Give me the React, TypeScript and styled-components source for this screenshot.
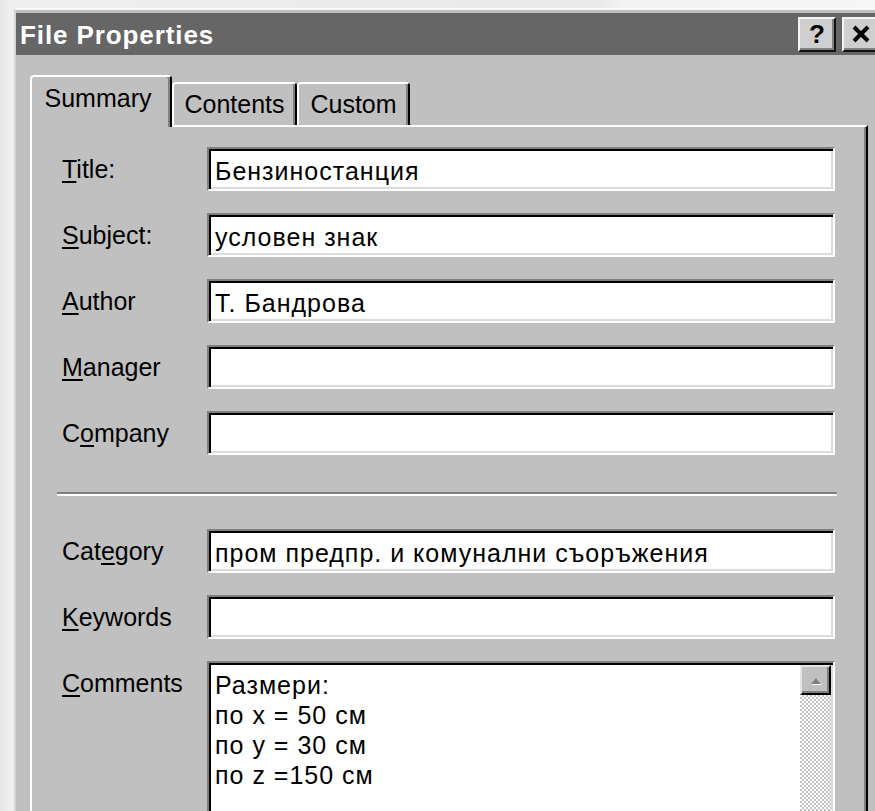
import React from "react";
import styled, { createGlobalStyle } from "styled-components";

const Global = createGlobalStyle`
  html, body {
    margin: 0;
    padding: 0;
    overflow: hidden;
  }
  body {
    background: linear-gradient(90deg, #e6e6e6 0px, #efefef 10px, #e9e9e9 600px, #f3f3f3 620px, #f6f6f6 100%);
    font-family: "Liberation Sans", Arial, sans-serif;
    color: #000;
  }
`;

const Page = styled.div`
  width: 875px;
  height: 811px;
  overflow: hidden;
  box-sizing: border-box;
  padding: 8px 0 0 14px;
`;

const Dialog = styled.div`
  width: 870px;
  height: 840px;
  box-sizing: border-box;
  background: #c0c0c0;
  border-top: 2px solid #f8f8f8;
  border-left: 2px solid #d6d6d6;
  padding-top: 3px;
  display: flex;
  flex-direction: column;
`;

const TitleBar = styled.div`
  height: 42px;
  background: #666666;
  display: flex;
  align-items: center;
  padding: 0 4px 0 4px;
`;

const TitleText = styled.div`
  color: #ffffff;
  font-weight: bold;
  font-size: 26px;
  letter-spacing: 0.9px;
  line-height: 30px;
  padding-top: 2px;
`;

const CaptionButtons = styled.div`
  margin-left: auto;
  display: flex;
  gap: 6px;
`;

const CaptionButton = styled.div`
  width: 38px;
  height: 35px;
  box-sizing: border-box;
  background: #cfcfcf;
  border-top: 2px solid #f4f4f4;
  border-left: 2px solid #f4f4f4;
  border-right: 2px solid #111;
  border-bottom: 2px solid #111;
  box-shadow: inset -2px -2px #808080;
  display: flex;
  align-items: center;
  justify-content: center;
  font-weight: bold;
  font-size: 26px;
  line-height: 28px;
`;

const Body = styled.div`
  padding: 20px 0 0 14px;
  display: flex;
  flex-direction: column;
`;

const TabStrip = styled.div`
  display: flex;
  align-items: flex-end;
  position: relative;
  z-index: 1;
`;

const Tab = styled.div<{ $active?: boolean; $w: number }>`
  width: ${(p) => p.$w}px;
  height: ${(p) => (p.$active ? 52 : 43)}px;
  margin-bottom: ${(p) => (p.$active ? -2 : 0)}px;
  box-sizing: border-box;
  background: #c0c0c0;
  border-top: 2px solid #ffffff;
  border-left: 2px solid #ffffff;
  border-right: 2px solid #000;
  box-shadow: inset -2px 0 #808080;
  border-radius: 4px 4px 0 0;
  text-align: center;
  font-size: 25px;
  line-height: 29px;
  padding-top: ${(p) => (p.$active ? 7 : 6)}px;
  padding-right: ${(p) => (p.$active ? 6 : 0)}px;
`;

const Panel = styled.div`
  width: 838px;
  box-sizing: border-box;
  border-top: 2px solid #ffffff;
  border-left: 2px solid #ffffff;
  border-right: 2px solid #000;
  box-shadow: inset -2px 0 #808080;
  padding: 20px 31px 0 30px;
  display: flex;
  flex-direction: column;
  gap: 22px;
  height: 720px;
`;

const Row = styled.div<{ $top?: boolean }>`
  display: flex;
  align-items: ${(p) => (p.$top ? "flex-start" : "center")};
`;

const Label = styled.div`
  width: 145px;
  flex: none;
  height: 44px;
  box-sizing: border-box;
  padding-top: 4px;
  font-size: 25px;
  line-height: 36px;
  white-space: nowrap;

  u {
    text-decoration-thickness: 2px;
    text-underline-offset: 3px;
  }
`;

const Field = styled.div<{ $h?: number }>`
  flex: 1;
  height: ${(p) => p.$h ?? 44}px;
  box-sizing: border-box;
  background: #ffffff;
  border-top: 2px solid #808080;
  border-left: 2px solid #808080;
  border-right: 2px solid #ffffff;
  border-bottom: 2px solid #ffffff;
  box-shadow: inset 2px 2px #000, inset -2px -2px #dcdcdc;
  padding: 4px 4px 0 6px;
  font-size: 25px;
  letter-spacing: 1px;
  line-height: 36px;
  white-space: nowrap;
  overflow: hidden;
`;

const MemoField = styled(Field)`
  display: flex;
  padding: 2px 2px 0 6px;
`;

const MemoText = styled.div`
  flex: 1;
  padding-top: 5px;
  line-height: 30px;
  white-space: pre;
`;

const ScrollBar = styled.div`
  width: 31px;
  flex: none;
  display: flex;
  flex-direction: column;
  background-color: #c0c0c0;
  background-image: repeating-conic-gradient(#ffffff 0 25%, #c0c0c0 0 50%);
  background-size: 4px 4px;
`;

const ScrollButton = styled.div`
  height: 30px;
  box-sizing: border-box;
  background: #c0c0c0;
  border-top: 2px solid #e4e4e4;
  border-left: 2px solid #e4e4e4;
  border-right: 2px solid #000;
  border-bottom: 2px solid #000;
  box-shadow: inset -2px -2px #808080;
  display: flex;
  align-items: flex-end;
  justify-content: center;
  padding-bottom: 7px;
`;

const Divider = styled.div`
  height: 0;
  border-top: 2px solid #808080;
  border-bottom: 2px solid #ffffff;
  margin: 15px -2px 11px -5px;
`;

const UpArrow = () => (
  <svg width="14" height="10" viewBox="0 0 14 10">
    <polygon points="7,2 12,8 2,8" fill="#ffffff" transform="translate(1,1)" />
    <polygon points="7,2 12,8 2,8" fill="#808080" />
  </svg>
);

const CloseGlyph = () => (
  <svg width="20" height="18" viewBox="0 0 20 18">
    <path d="M3 2 L17 16 M17 2 L3 16" stroke="#000" strokeWidth="4" />
  </svg>
);

type FieldRow = { label: React.ReactNode; value: string };

const upper: FieldRow[] = [
  { label: <><u>T</u>itle:</>, value: "Бензиностанция" },
  { label: <><u>S</u>ubject:</>, value: "условен знак" },
  { label: <><u>A</u>uthor</>, value: "Т. Бандрова" },
  { label: <><u>M</u>anager</>, value: "" },
  { label: <>C<u>o</u>mpany</>, value: "" },
];

const lower: FieldRow[] = [
  { label: <>Cat<u>e</u>gory</>, value: "пром предпр. и комунални съоръжения" },
  { label: <><u>K</u>eywords</>, value: "" },
];

const comments = "Размери:\nпо x = 50 см\nпо y = 30 см\nпо z =150 см";

export default function App() {
  return (
    <Page>
      <Global />
      <Dialog>
        <TitleBar>
          <TitleText>File Properties</TitleText>
          <CaptionButtons>
            <CaptionButton>?</CaptionButton>
            <CaptionButton>
              <CloseGlyph />
            </CaptionButton>
          </CaptionButtons>
        </TitleBar>
        <Body>
          <TabStrip>
            <Tab $active $w={142}>Summary</Tab>
            <Tab $w={125}>Contents</Tab>
            <Tab $w={113}>Custom</Tab>
          </TabStrip>
          <Panel>
            {upper.map((r, i) => (
              <Row key={i}>
                <Label>{r.label}</Label>
                <Field>{r.value}</Field>
              </Row>
            ))}
            <Divider />
            {lower.map((r, i) => (
              <Row key={i}>
                <Label>{r.label}</Label>
                <Field>{r.value}</Field>
              </Row>
            ))}
            <Row $top>
              <Label>
                <u>C</u>omments
              </Label>
              <MemoField $h={180}>
                <MemoText>{comments}</MemoText>
                <ScrollBar>
                  <ScrollButton>
                    <UpArrow />
                  </ScrollButton>
                </ScrollBar>
              </MemoField>
            </Row>
          </Panel>
        </Body>
      </Dialog>
    </Page>
  );
}
